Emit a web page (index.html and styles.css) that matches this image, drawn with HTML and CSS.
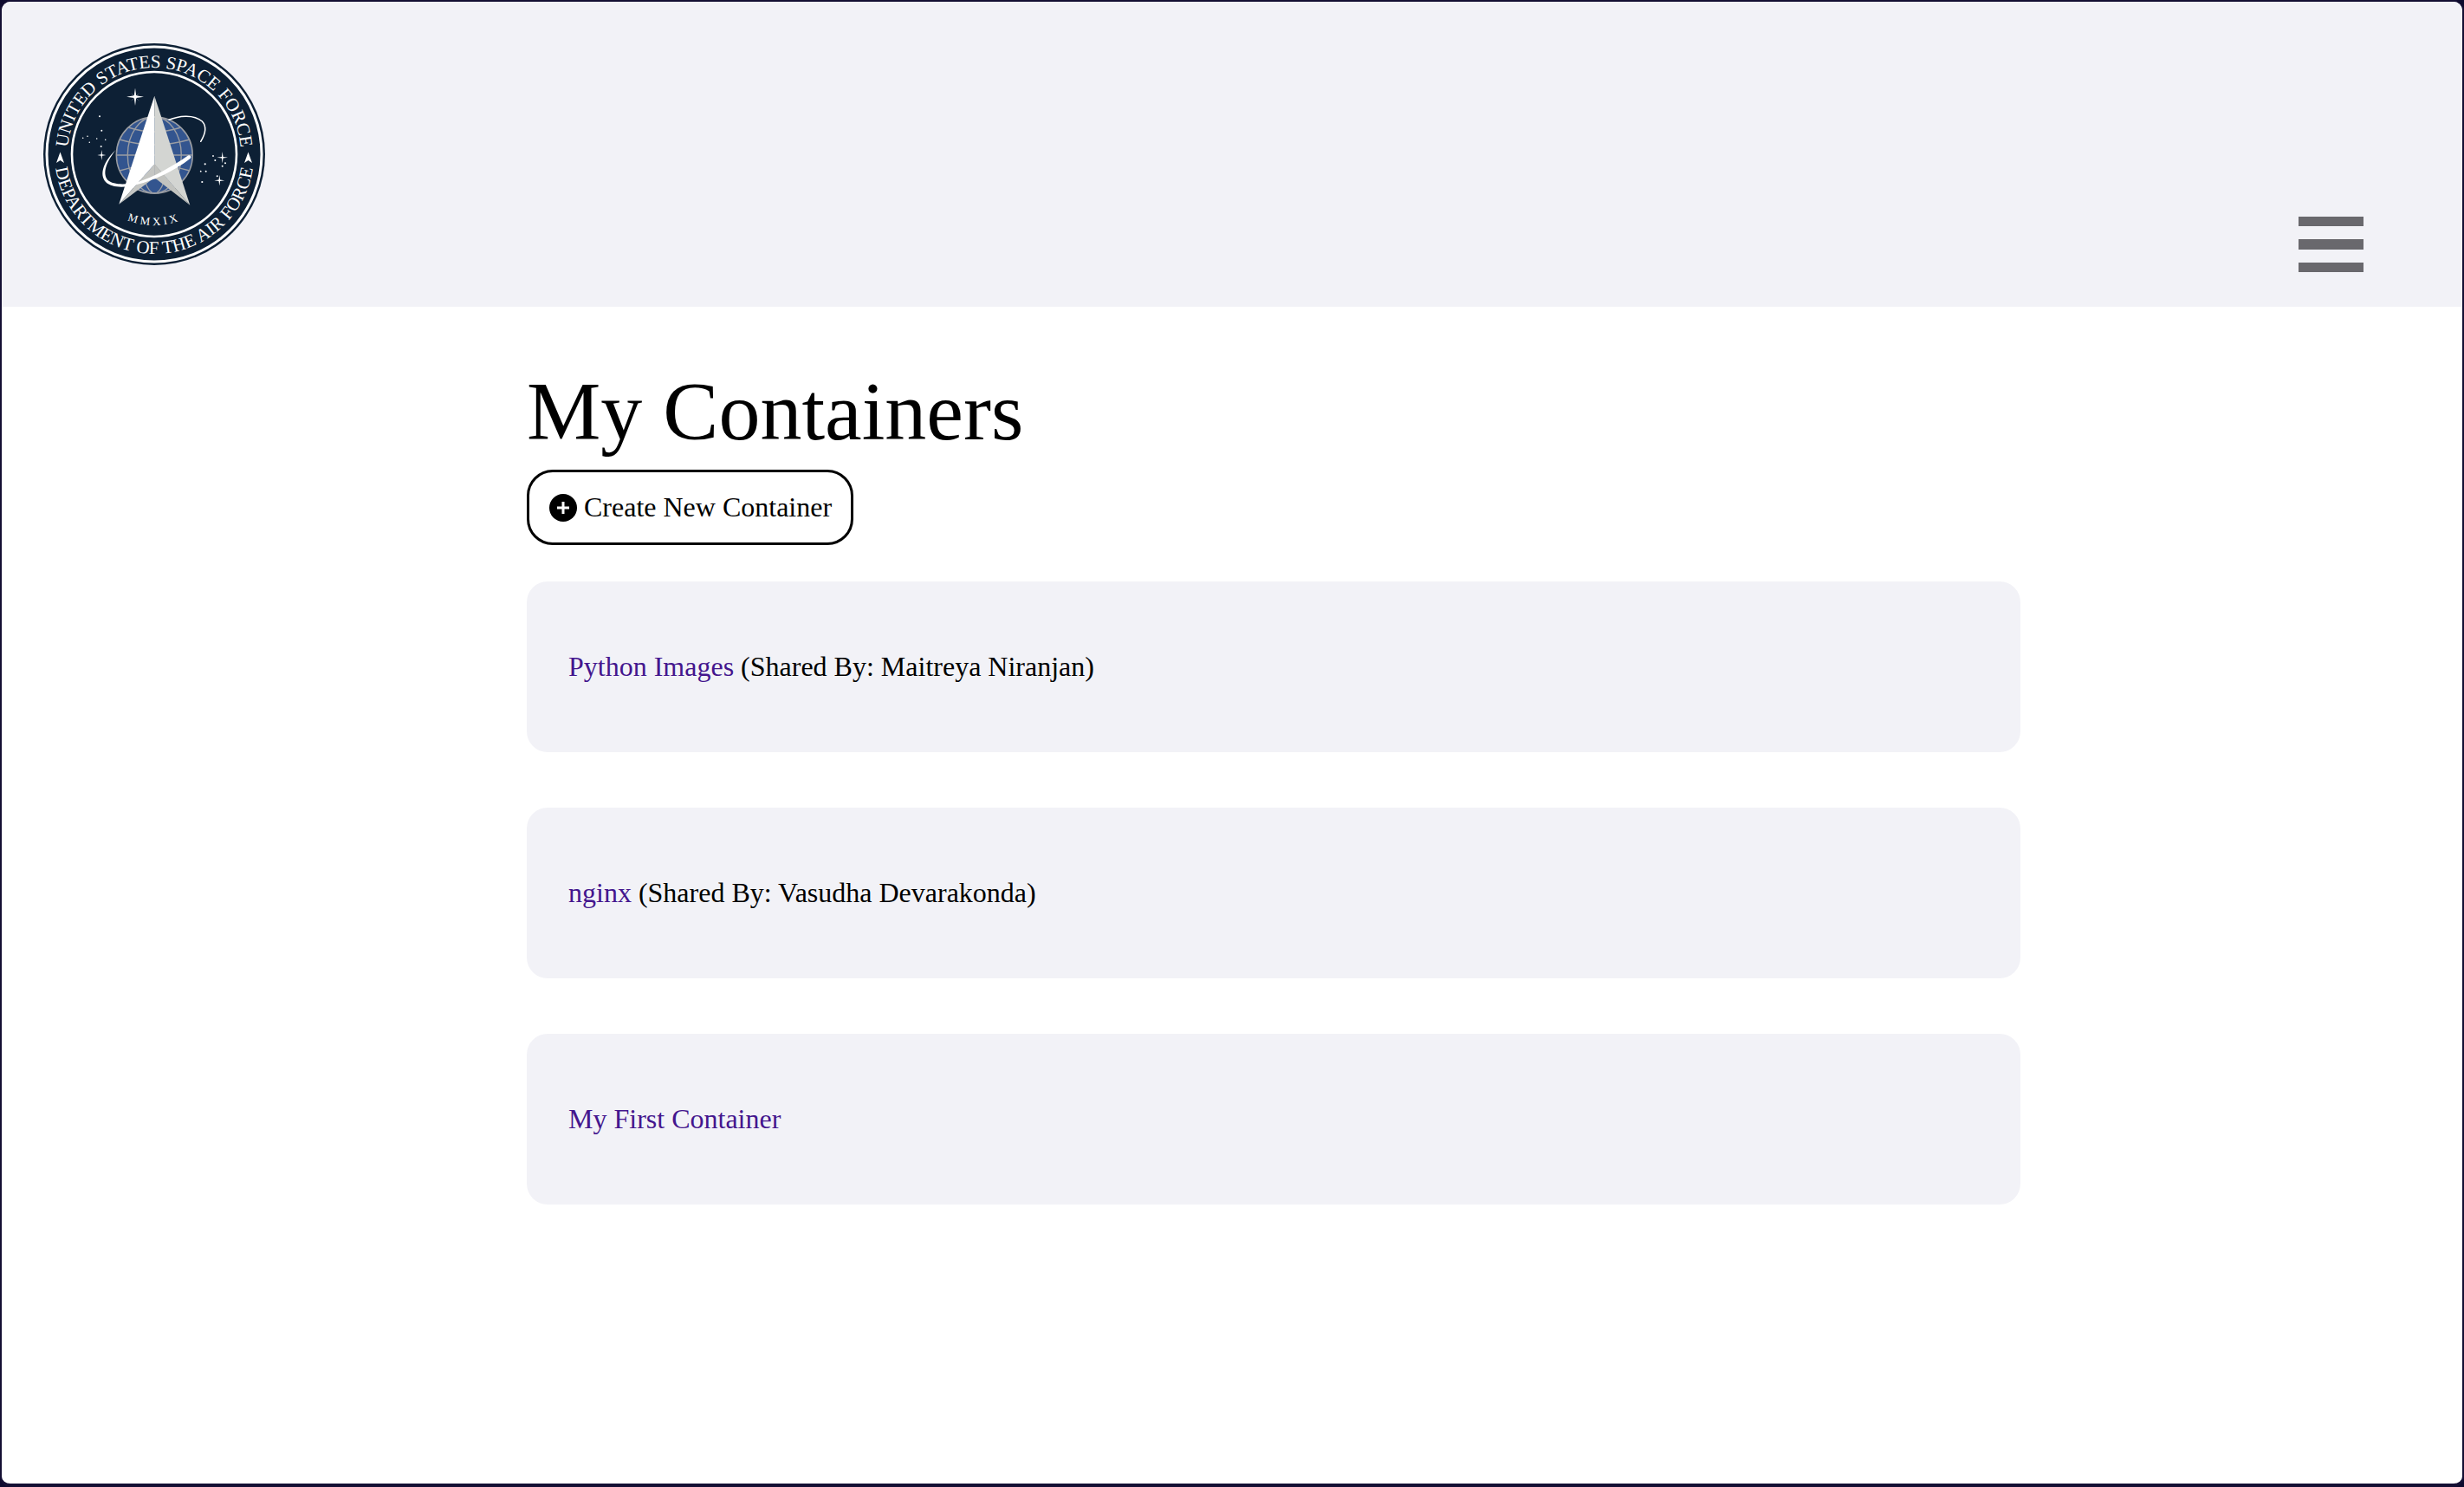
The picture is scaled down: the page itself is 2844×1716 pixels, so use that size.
FILE: index.html
```html
<!DOCTYPE html>
<html lang="en">
<head>
<meta charset="utf-8">
<title>My Containers</title>
<link rel="stylesheet" href="styles.css">
</head>
<body>
<div class="frame">
  <header class="topbar">
    <svg class="seal" viewBox="0 0 256 256" role="img" aria-label="United States Space Force seal">
      <defs>
        <path id="arcTop" d="M 28 128 A 100 100 0 0 1 228 128"/>
        <path id="arcBottom" d="M 13 128 A 115 115 0 0 0 243 128"/>
        <path id="arcYear" d="M 46 128 A 82 82 0 0 0 210 128"/>
      </defs>
      <circle cx="128" cy="128" r="128" fill="#0d2035"/>
      <circle cx="128" cy="128" r="124" fill="none" stroke="#fff" stroke-width="3"/>
      <circle cx="128" cy="128" r="95" fill="none" stroke="#fff" stroke-width="2.600"/>
      <text class="seal-text"><textPath href="#arcTop" startOffset="50%" text-anchor="middle">UNITED STATES SPACE FORCE</textPath></text>
      <text class="seal-text"><textPath href="#arcBottom" startOffset="50%" text-anchor="middle">DEPARTMENT OF THE AIR FORCE</textPath></text>
      <text class="seal-year"><textPath href="#arcYear" startOffset="50%" text-anchor="middle">MMXIX</textPath></text>
      <path d="M19.500 125.500L24 138L19.500 135L15 138Z M236.500 125.500L241 138L236.500 135L232 138Z" fill="#fff"/>
      <circle cx="128.300" cy="129" r="44" fill="#33558f" stroke="#9a9da3" stroke-width="1.500"/>
      <g fill="none" stroke="#9a9da3" stroke-width="1.400">
        <ellipse cx="128.300" cy="129" rx="15" ry="44"/>
        <ellipse cx="128.300" cy="129" rx="31" ry="44"/>
        <path d="M84.300 129h88M88 111q40 12 81 0M88 147q40-12 81 0M98 97q30 10 61 0M98 161q30-10 61 0"/>
      </g>
      <path d="M145 88.300C155 84 173 81 183.300 90C188 95 188 103 181.700 113.300" fill="none" stroke="#fff" stroke-width="1.500" stroke-linecap="round"/>
      <path d="M128.300 60.700L87.300 185.700L128.300 139.500Z" fill="#fff"/>
      <path d="M128.300 60.700L169.300 186.700L128.300 139.500Z" fill="#d3d5d2"/>
      <path d="M128.300 139.500L87.300 185.700L128.300 155Z" fill="#c5c6c3"/>
      <path d="M128.300 139.500L128.300 155L139 151.500Z" fill="#aeafab"/>
      <path d="M128.300 139.500L139 151.500L169.300 186.700L128.300 155Z" fill="#c2c3bf"/>
      <path d="M167 129.500C170 128.500 171.500 131.500 169.500 133C150 148 128 158 108 163C94 167 79 167 72 160C64 151 70 136 83.500 123C73 137 68 149 74 157.500C81 164 96 163 108 160.500C128 154 149 142 167 129.500Z" fill="#fff"/>
      <path d="M106 51.500l1.200 8.800 8.800 1.400-8.800 1.400-1.200 8.800-1.200-8.800-8.800-1.400 8.800-1.400z M101 57l5 4.700 5-4.700-4.700 5 4.700 5-5-4.700-5 4.700 4.700-5z" fill="#fff"/>
      <g fill="#fff">
        <circle cx="65" cy="84.300" r="1"/><circle cx="67.300" cy="100.700" r="1"/><circle cx="45.700" cy="109.300" r=".8"/><circle cx="51" cy="107.300" r=".8"/><circle cx="53.300" cy="114.300" r=".8"/><circle cx="61.700" cy="110" r=".8"/><circle cx="71.700" cy="111.300" r=".8"/><circle cx="66.700" cy="119" r="1"/>
        <path d="M67.300 123l.7 5.300 4.300.7-4.300.7-.7 5.300-.7-5.300-4.300-.7 4.300-.7z"/>
        <path d="M206.700 125l.8 5.900 5.500.8-5.500.8-.8 5.900-.8-5.900-5.500-.8 5.500-.8z"/>
        <path d="M203.300 152l.8 5.500 5.200.8-5.200.8-.8 5.500-.8-5.500-5.200-.8 5.200-.8z"/>
        <circle cx="196" cy="130" r=".9"/><circle cx="198.300" cy="135" r="1"/><circle cx="210" cy="138.300" r="1"/><circle cx="206.700" cy="141.700" r="1"/><circle cx="186.700" cy="139.300" r="1.100"/><circle cx="181.700" cy="147.700" r=".9"/><circle cx="187.700" cy="147.700" r="1"/><circle cx="200.700" cy="153.300" r="1"/><circle cx="183.300" cy="160" r="1.100"/>
      </g>
    </svg>
    <svg class="menu" viewBox="0 0 75 64" role="img" aria-label="Menu">
      <path d="M0 0h75v11H0zM0 26h75v12H0zM0 53h75v11H0z"/>
    </svg>
  </header>
  <main class="content">
    <h1 class="title">My Containers</h1>
    <a class="create" href="#">
      <svg class="plus" viewBox="0 0 32 32" aria-hidden="true"><circle cx="16" cy="16" r="16"/><path d="M14.500 9h3v5.500H23v3h-5.500V23h-3v-5.500H9v-3h5.500z" fill="#fff"/></svg>
      <span>Create New Container</span>
    </a>
    <ul class="list">
      <li class="card"><a class="link" href="#">Python Images</a> (Shared By: Maitreya Niranjan)</li>
      <li class="card"><a class="link" href="#">nginx</a> (Shared By: Vasudha Devarakonda)</li>
      <li class="card"><a class="link" href="#">My First Container</a></li>
    </ul>
  </main>
</div>
</body>
</html>
```
FILE: styles.css
```css
* { box-sizing: border-box; }
html, body { margin: 0; height: 100%; background: #0d0a2e; }
body { font-family: "Liberation Serif", "Times New Roman", serif; color: #000; }
.frame {
  height: 1716px;
  border: solid #140f33;
  border-width: 2px 2px 4px 2px;
  border-radius: 12px;
  background: #fff;
  overflow: hidden;
}
.topbar {
  height: 352px;
  background: #f2f2f7;
  display: flex;
  justify-content: space-between;
  padding: 48px 114px 40px 48px;
}
.seal { width: 256px; height: 256px; flex: none; }
.seal-text { font: 21px "Liberation Serif", serif; fill: #fff; }
.seal-year { font: 13px "Liberation Serif", serif; fill: #fff; letter-spacing: 3.500px; }
.menu { width: 75px; height: 64px; align-self: flex-end; fill: #69686d; }
.content { width: 1724px; margin-left: 606px; }
.title { margin: 0; padding-top: 68px; font-size: 96px; font-weight: 400; line-height: 106px; }
.create {
  display: inline-flex;
  align-items: center;
  gap: 8px;
  height: 87px;
  margin-top: 14px;
  padding: 0 22px 0 23px;
  border: 3px solid #000;
  border-radius: 30px;
  color: #000;
  font-size: 32px;
  text-decoration: none;
}
.plus { width: 32px; height: 32px; flex: none; }
.list { list-style: none; margin: 42px 0 0; padding: 0; display: flex; flex-direction: column; gap: 64px; }
.card {
  height: 197px;
  display: block;
  padding: 80px 48px 0;
  background: #f2f2f7;
  border-radius: 24px;
  font-size: 32px;
  line-height: 37px;
}
.link { color: #44168e; text-decoration: none; }
```
